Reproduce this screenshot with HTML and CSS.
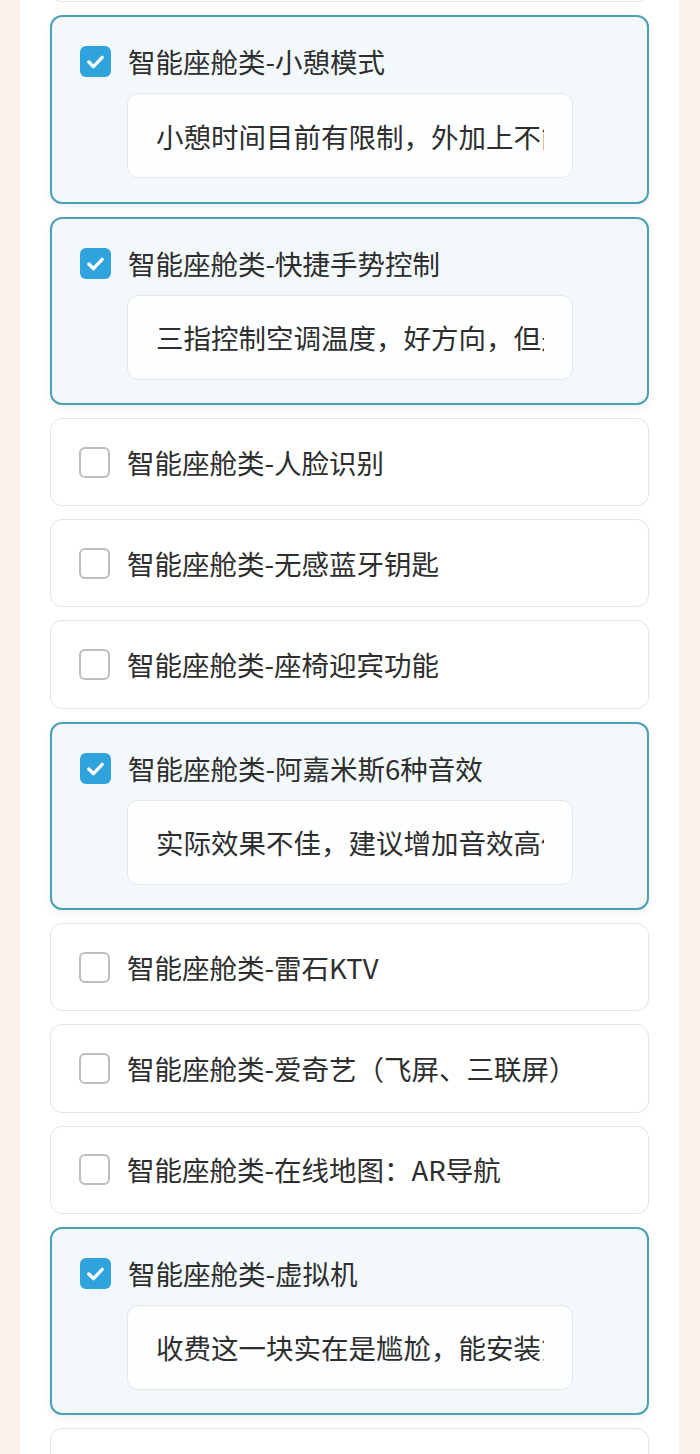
FILE: index.html
```html
<!DOCTYPE html>
<html>
<head>
    <meta charset="UTF-8">
    <title>智能座舱类功能反馈</title>
    <link rel="stylesheet" href="styles.css">
</head>
<body>
    <div class="panel">
        <div class="list">
            <div class="item">
                <label class="row"><span class="box"></span><span class="name">智能座舱类-语音助手</span></label>
            </div>

            <div class="item checked">
                <label class="row">
                    <span class="box"><svg viewBox="0 0 30 30"><polyline points="8.5,15.5 13,20 21.5,11"/></svg></span>
                    <span class="name">智能座舱类-小憩模式</span>
                </label>
                <input class="note" type="text" value="小憩时间目前有限制，外加上不能调节座椅角度">
            </div>

            <div class="item checked">
                <label class="row">
                    <span class="box"><svg viewBox="0 0 30 30"><polyline points="8.5,15.5 13,20 21.5,11"/></svg></span>
                    <span class="name">智能座舱类-快捷手势控制</span>
                </label>
                <input class="note" type="text" value="三指控制空调温度，好方向，但是识别率不高">
            </div>

            <div class="item">
                <label class="row"><span class="box"></span><span class="name">智能座舱类-人脸识别</span></label>
            </div>

            <div class="item">
                <label class="row"><span class="box"></span><span class="name">智能座舱类-无感蓝牙钥匙</span></label>
            </div>

            <div class="item">
                <label class="row"><span class="box"></span><span class="name">智能座舱类-座椅迎宾功能</span></label>
            </div>

            <div class="item checked">
                <label class="row">
                    <span class="box"><svg viewBox="0 0 30 30"><polyline points="8.5,15.5 13,20 21.5,11"/></svg></span>
                    <span class="name">智能座舱类-阿嘉米斯6种音效</span>
                </label>
                <input class="note" type="text" value="实际效果不佳，建议增加音效高低音调节">
            </div>

            <div class="item">
                <label class="row"><span class="box"></span><span class="name">智能座舱类-雷石KTV</span></label>
            </div>

            <div class="item">
                <label class="row"><span class="box"></span><span class="name">智能座舱类-爱奇艺（飞屏、三联屏）</span></label>
            </div>

            <div class="item">
                <label class="row"><span class="box"></span><span class="name">智能座舱类-在线地图：AR导航</span></label>
            </div>

            <div class="item checked">
                <label class="row">
                    <span class="box"><svg viewBox="0 0 30 30"><polyline points="8.5,15.5 13,20 21.5,11"/></svg></span>
                    <span class="name">智能座舱类-虚拟机</span>
                </label>
                <input class="note" type="text" value="收费这一块实在是尴尬，能安装第三方应用就好了">
            </div>

            <div class="item">
                <label class="row"><span class="box"></span><span class="name">智能座舱类-车载游戏</span></label>
            </div>
        </div>
    </div>
</body>
</html>
```

FILE: styles.css
```css
html, body {
    margin: 0;
    height: 100%;
    overflow: hidden;
}
body {
    font-family: "Noto Sans CJK SC", "Noto Sans", sans-serif;
    background: #fbf4ee;
    color: #2e2e2e;
}
.panel {
    margin: 0 21px 0 20px;
    min-height: 100%;
    background: #fff;
}
.list {
    display: flex;
    flex-direction: column;
    gap: 13px;
    padding: 0 30px;
    margin-top: -86px;
}
.item {
    box-sizing: border-box;
    height: 88.3px;
    padding: 0 28px;
    border: 1.5px solid #e4e4e4;
    border-radius: 12px;
    background: #fff;
    display: flex;
    flex-direction: column;
    justify-content: center;
}
.item.checked {
    height: 188.3px;
    justify-content: flex-start;
    padding: 29px 28px 0;
    border: 2px solid #4ba1b3;
    background: #f3f9fb;
    box-shadow: 0 4px 10px rgba(0, 0, 0, 0.05);
}
.row {
    display: flex;
    align-items: center;
    gap: 17px;
    height: 31px;
}
.box {
    box-sizing: border-box;
    flex: none;
    width: 31px;
    height: 31px;
    border: 2px solid #bdbdbd;
    border-radius: 6px;
    background: #fff;
}
.checked .box {
    border: none;
    background: #2fa4dc;
}
.box svg {
    display: block;
    width: 31px;
    height: 31px;
    fill: none;
    stroke: #fff;
    stroke-width: 3.2;
    stroke-linecap: round;
    stroke-linejoin: round;
}
.name {
    font-size: 27.5px;
    line-height: 31px;
    white-space: nowrap;
}
.note {
    box-sizing: border-box;
    width: 446px;
    height: 85px;
    margin: 16px 0 0 47px;
    padding: 0 28px 0 28px;
    border: 1.5px solid #e6e6e6;
    border-radius: 11px;
    background: #fdfeff;
    font-family: inherit;
    font-size: 27.5px;
    color: #2e2e2e;
    outline: none;
}
```
